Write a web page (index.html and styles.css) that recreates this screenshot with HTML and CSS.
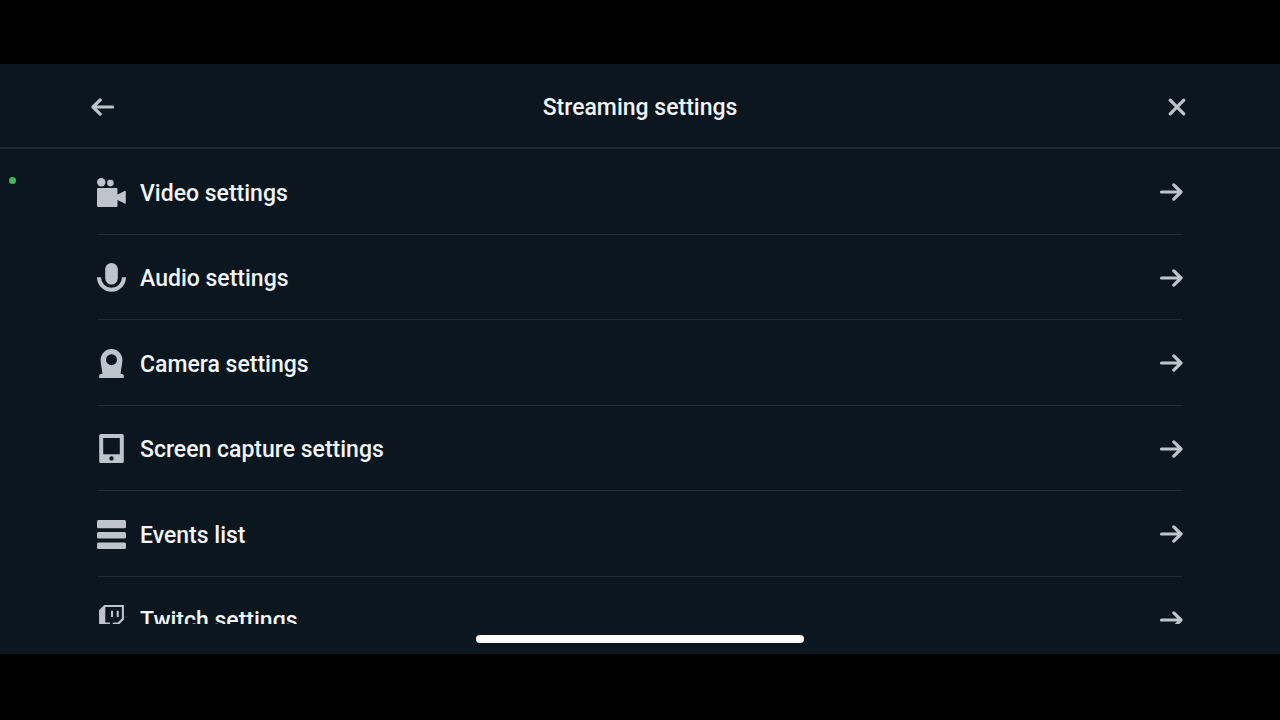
FILE: index.html
```html
<!DOCTYPE html>
<html lang="en">
  <head>
    <meta charset="UTF-8" />
    <meta name="viewport" content="width=device-width, initial-scale=1.0" />
    <title>Streaming settings</title>
    <link rel="stylesheet" href="styles.css">
  </head>
  <body>
    <svg class="symbols" aria-hidden="true">
      <symbol id="arrow-right" viewBox="0 0 24 24">
        <path d="M2.5 12H22M14.8 4.9L22 12L14.8 19.1" />
      </symbol>
    </svg>

    <div class="screen">
      <header class="header">
        <button class="icon-button" type="button" aria-label="Back">
          <svg class="stroke-icon" viewBox="0 0 24 24"><path d="M21.5 12H2M9.2 4.9L2 12L9.2 19.1" /></svg>
        </button>
        <h1>Streaming settings</h1>
        <button class="icon-button" type="button" aria-label="Close">
          <svg class="stroke-icon" viewBox="0 0 24 24"><path d="M5.2 5.2L18.8 18.8M18.8 5.2L5.2 18.8" /></svg>
        </button>
      </header>

      <main class="content">
        <ul class="settings-list">
          <li>
            <a href="#video" class="settings-link">
              <svg class="item-icon" viewBox="0 0 29 29">
                <circle cx="4.3" cy="4.2" r="4.2" />
                <circle cx="13.4" cy="5.1" r="3.3" />
                <path d="M1.2 10H19.3Q20.5 10 20.5 11.2V16.5L27.6 13Q28.8 12.5 28.8 13.6V25Q28.8 26.2 27.6 25.6L20.5 22V27.7Q20.5 29 19.3 29H1.2Q0 29 0 27.7V11.2Q0 10 1.2 10Z" />
              </svg>
              <span class="label">Video settings</span>
              <svg class="stroke-icon"><use href="#arrow-right" /></svg>
            </a>
          </li>
          <li>
            <a href="#audio" class="settings-link">
              <svg class="item-icon" viewBox="0 0 29 29">
                <rect x="8.2" y="0" width="12.6" height="21.5" rx="6.3" />
                <path class="arc" d="M2 14.3A12.5 12.5 0 0 0 27 14.3" />
              </svg>
              <span class="label">Audio settings</span>
              <svg class="stroke-icon"><use href="#arrow-right" /></svg>
            </a>
          </li>
          <li>
            <a href="#camera" class="settings-link">
              <svg class="item-icon" viewBox="0 0 29 29">
                <path fill-rule="evenodd" d="M14.5 0A10.9 10.9 0 0 1 25.4 10.9C25.4 15.5 24 19 23.6 25H25.2Q26.8 25 26.8 26.6V29H2.2V26.6Q2.2 25 3.8 25H5.4C5 19 3.6 15.5 3.6 10.9A10.9 10.9 0 0 1 14.5 0ZM14.5 5.2A5.5 5.5 0 1 0 14.5 16.2A5.5 5.5 0 1 0 14.5 5.2Z" />
              </svg>
              <span class="label">Camera settings</span>
              <svg class="stroke-icon"><use href="#arrow-right" /></svg>
            </a>
          </li>
          <li>
            <a href="#screen-capture" class="settings-link">
              <svg class="item-icon" viewBox="0 0 29 29">
                <path fill-rule="evenodd" d="M3.7 0H25.3Q26.8 0 26.8 1.5V27.5Q26.8 29 25.3 29H3.7Q2.2 29 2.2 27.5V1.5Q2.2 0 3.7 0ZM6.2 4V20.2H22.8V4ZM14.5 22.2A2.2 2.2 0 1 0 14.5 26.6A2.2 2.2 0 1 0 14.5 22.2Z" />
              </svg>
              <span class="label">Screen capture settings</span>
              <svg class="stroke-icon"><use href="#arrow-right" /></svg>
            </a>
          </li>
          <li>
            <a href="#events" class="settings-link">
              <svg class="item-icon" viewBox="0 0 29 29">
                <rect x="0" y="0" width="29" height="8.2" rx="1.5" />
                <rect x="0" y="12" width="29" height="6.6" rx="1.5" />
                <rect x="0" y="22.4" width="29" height="6.6" rx="1.5" />
              </svg>
              <span class="label">Events list</span>
              <svg class="stroke-icon"><use href="#arrow-right" /></svg>
            </a>
          </li>
          <li>
            <a href="#twitch" class="settings-link">
              <svg class="item-icon" viewBox="0 0 24 24">
                <path d="M11.571 4.714h1.715v5.143H11.57zm4.715 0H18v5.143h-1.714zM6 0L1.714 4.286v15.428h5.143V24l4.286-4.286h3.428L22.286 12V0zm14.571 11.143l-3.428 3.428h-3.429l-3 3v-3H6.857V1.714h13.714Z" />
              </svg>
              <span class="label">Twitch settings</span>
              <svg class="stroke-icon"><use href="#arrow-right" /></svg>
            </a>
          </li>
        </ul>
        <span class="status-dot"></span>
      </main>

      <footer class="home-area">
        <div class="home-indicator"></div>
      </footer>
    </div>
  </body>
</html>
```

FILE: styles.css
```css
* {
  box-sizing: border-box;
}

body {
  font-family: Roboto, Arial, sans-serif;
  margin: 0;
  padding: 64px 0 66px;
  height: 100vh;
  background-color: #000;
  color: #f1f5f9;
}

.symbols {
  display: none;
}

.screen {
  display: flex;
  flex-direction: column;
  height: 100%;
  background-color: #0c161e;
}

/* Header */
.header {
  display: flex;
  align-items: center;
  justify-content: space-between;
  padding: 27px 91px 25px;
  border-bottom: 2px solid #1f2930;
}

.header h1 {
  margin: 0;
  padding-top: 2px;
  font-size: 23px;
  line-height: 29px;
  font-weight: 500;
}

.icon-button {
  display: flex;
  padding: 0;
  border: none;
  background: none;
  cursor: pointer;
}

/* Icons */
.stroke-icon {
  width: 24px;
  height: 24px;
  flex: none;
  fill: none;
  stroke: #bec4cc;
  stroke-width: 3.2;
  stroke-linecap: round;
  stroke-linejoin: round;
}

.item-icon {
  width: 29px;
  height: 29px;
  flex: none;
  fill: #bec4cc;
}

.item-icon .arc {
  fill: none;
  stroke: #bec4cc;
  stroke-width: 4;
}

/* Settings list */
.content {
  position: relative;
  flex: 1;
  min-height: 0;
}

.settings-list {
  display: grid;
  grid-auto-rows: 18%;
  height: 100%;
  margin: 0;
  padding: 0 97px;
  list-style: none;
  overflow-y: auto;
  scrollbar-width: none;
}

.settings-list li {
  border-bottom: 1px solid #232c33;
}

.settings-link {
  display: flex;
  align-items: center;
  gap: 14px;
  height: 100%;
  padding-top: 2px;
  color: inherit;
  text-decoration: none;
}

.label {
  flex: 1;
  padding-top: 2px;
  font-size: 23px;
  line-height: 29px;
  font-weight: 500;
}

.status-dot {
  position: absolute;
  top: 28px;
  left: 9px;
  width: 7px;
  height: 7px;
  border-radius: 50%;
  background-color: #3fb558;
}

/* Home indicator */
.home-area {
  display: flex;
  align-items: center;
  justify-content: center;
  height: 30px;
}

.home-indicator {
  width: 328px;
  height: 8px;
  border-radius: 4px;
  background-color: #fff;
}
```
